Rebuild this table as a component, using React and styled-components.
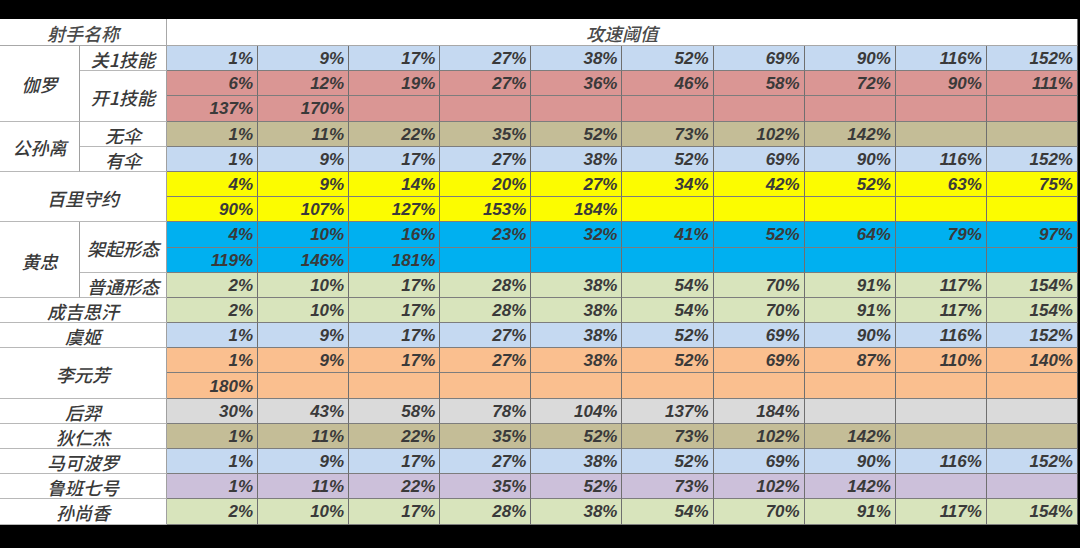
import React from "react"
import styled, { createGlobalStyle } from "styled-components"

const GlobalStyle = createGlobalStyle`
  html, body {
    margin: 0;
    padding: 0;
    background: #000;
  }
`

const palette = {
  blue: "#c5d9f1",
  red: "#da9694",
  olive: "#c4bd97",
  yellow: "#fcfc00",
  cyan: "#00b0f0",
  green: "#d8e4bc",
  peach: "#fabf8f",
  gray: "#dadada",
  purple: "#ccc0da",
}

const base = [1, 9, 17, 27, 38, 52, 69, 90, 116, 152]
const green = [2, 10, 17, 28, 38, 54, 70, 91, 117, 154]
const olive = [1, 11, 22, 35, 52, 73, 102, 142]

const dataRows = [
  { color: "blue", values: base },
  { color: "red", values: [6, 12, 19, 27, 36, 46, 58, 72, 90, 111] },
  { color: "red", values: [137, 170] },
  { color: "olive", values: olive },
  { color: "blue", values: base },
  { color: "yellow", values: [4, 9, 14, 20, 27, 34, 42, 52, 63, 75] },
  { color: "yellow", values: [90, 107, 127, 153, 184] },
  { color: "cyan", values: [4, 10, 16, 23, 32, 41, 52, 64, 79, 97] },
  { color: "cyan", values: [119, 146, 181] },
  { color: "green", values: green },
  { color: "green", values: green },
  { color: "blue", values: base },
  { color: "peach", values: [1, 9, 17, 27, 38, 52, 69, 87, 110, 140] },
  { color: "peach", values: [180] },
  { color: "gray", values: [30, 43, 58, 78, 104, 137, 184] },
  { color: "olive", values: olive },
  { color: "blue", values: base },
  { color: "purple", values: olive },
  { color: "green", values: green },
]

// row = grid line (header is row 1)
const names = [
  { text: "伽罗", row: 2, rows: 3, col: 1, cols: 1 },
  { text: "关1技能", row: 2, rows: 1, col: 2, cols: 1 },
  { text: "开1技能", row: 3, rows: 2, col: 2, cols: 1 },
  { text: "公孙离", row: 5, rows: 2, col: 1, cols: 1 },
  { text: "无伞", row: 5, rows: 1, col: 2, cols: 1 },
  { text: "有伞", row: 6, rows: 1, col: 2, cols: 1 },
  { text: "百里守约", row: 7, rows: 2, col: 1, cols: 2 },
  { text: "黄忠", row: 9, rows: 3, col: 1, cols: 1 },
  { text: "架起形态", row: 9, rows: 2, col: 2, cols: 1 },
  { text: "普通形态", row: 11, rows: 1, col: 2, cols: 1 },
  { text: "成吉思汗", row: 12, rows: 1, col: 1, cols: 2 },
  { text: "虞姬", row: 13, rows: 1, col: 1, cols: 2 },
  { text: "李元芳", row: 14, rows: 2, col: 1, cols: 2 },
  { text: "后羿", row: 16, rows: 1, col: 1, cols: 2 },
  { text: "狄仁杰", row: 17, rows: 1, col: 1, cols: 2 },
  { text: "马可波罗", row: 18, rows: 1, col: 1, cols: 2 },
  { text: "鲁班七号", row: 19, rows: 1, col: 1, cols: 2 },
  { text: "孙尚香", row: 20, rows: 1, col: 1, cols: 2 },
]

export default function App() {
  return (
    <>
      <GlobalStyle />
      <Screen>
        <Table>
          <HeadCell $col={1} $cols={2}>射手名称</HeadCell>
          <HeadCell $col={3} $cols={10} $last>
            攻速阈值
          </HeadCell>
          {names.map((n) => (
            <NameCell
              key={n.text}
              $row={n.row}
              $rows={n.rows}
              $col={n.col}
              $cols={n.cols}
            >
              {n.text}
            </NameCell>
          ))}
          {dataRows.map((r, i) =>
            Array.from({ length: 10 }).map((_, j) => (
              <ValueCell
                key={`${i}-${j}`}
                $row={i + 2}
                $col={j + 3}
                $bg={palette[r.color]}
                $last={j === 9}
              >
                {r.values[j] !== undefined ? `${r.values[j]}%` : ""}
              </ValueCell>
            ))
          )}
        </Table>
      </Screen>
    </>
  )
}

const Screen = styled.div`
  width: 1080px;
  height: 548px;
  background: #000;
  padding-top: 19px;
  box-sizing: border-box;
  overflow: hidden;
`

const Table = styled.div`
  width: 1078px;
  display: grid;
  grid-template-columns: 80px 87px repeat(10, 1fr);
  grid-template-rows: 27px repeat(19, 25.2px);
  background: #fff;
  font-family: "Liberation Sans", "Noto Sans CJK SC", sans-serif;
  font-style: italic;
  font-size: 17px;
  color: #333;
`

const Cell = styled.div`
  box-sizing: border-box;
  grid-row: ${(p) => p.$row} / span ${(p) => p.$rows || 1};
  grid-column: ${(p) => p.$col} / span ${(p) => p.$cols || 1};
  display: flex;
  align-items: center;
  padding-top: 2px;
  border-bottom: 1px solid #8e8e8e;
  border-right: 1px solid ${(p) => (p.$last ? "#6e6e6e" : "#8e8e8e")};
  white-space: nowrap;
`

const HeadCell = styled(Cell)`
  grid-row: 1;
  justify-content: center;
  font-family: "Noto Sans CJK SC", sans-serif;
  font-size: 18px;
  font-weight: 500;
  color: #4a4a4a;
  border-bottom-color: #a8a8a8;
  border-right-color: ${(p) => (p.$last ? "#6e6e6e" : "#a8a8a8")};
`

const NameCell = styled(Cell)`
  justify-content: center;
  background: #fff;
  font-family: "Noto Sans CJK SC", sans-serif;
  font-size: 18px;
  font-weight: 500;
  color: #3a3a3a;
  border-bottom-color: #b8b8b8;
  border-right-color: #a0a0a0;
`

const ValueCell = styled(Cell)`
  justify-content: flex-end;
  padding-right: 4px;
  font-weight: 700;
  color: #3a3a3a;
  background: ${(p) => p.$bg};
  border-bottom-color: #7d7d7d;
  border-right-color: ${(p) => (p.$last ? "#5a5a5a" : "#6f6f6f")};
`
